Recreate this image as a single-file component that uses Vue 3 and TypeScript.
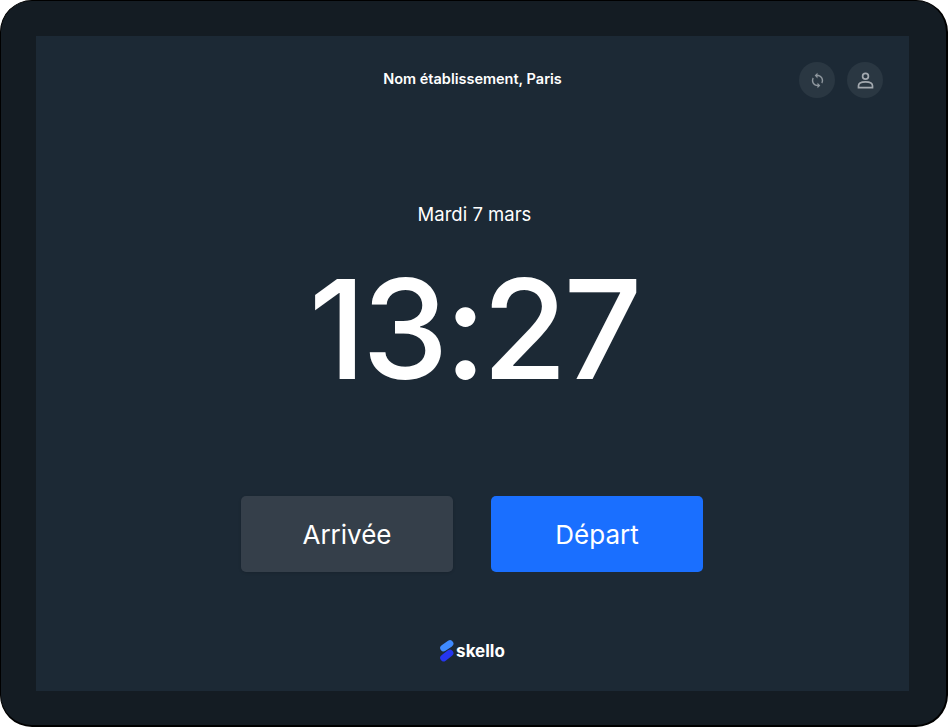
<script setup lang="ts">
const place = 'Nom établissement, Paris'
const date = 'Mardi 7 mars'
const time = '13:27'
</script>

<template>
  <div class="device">
    <main class="screen">
      <header class="top">
        <div class="place">{{ place }}</div>
        <div class="actions">
          <button class="round" aria-label="Synchroniser">
            <svg width="17" height="17" viewBox="0 0 24 24" fill="#8f979e">
              <path d="M12 4V1L8 5l4 4V6c3.31 0 6 2.69 6 6 0 1.01-.25 1.97-.7 2.8l1.46 1.46C19.54 15.03 20 13.57 20 12c0-4.42-3.58-8-8-8zm0 14c-3.31 0-6-2.69-6-6 0-1.01.25-1.97.7-2.8L5.24 7.74C4.46 8.97 4 10.43 4 12c0 4.42 3.58 8 8 8v3l4-4-4-4v3z" />
            </svg>
          </button>
          <button class="round" aria-label="Profil">
            <svg width="17" height="17" viewBox="0 0 17 17" fill="none" stroke="#a3a9af" stroke-width="1.7">
              <circle cx="8.5" cy="4.2" r="2.9" />
              <path d="M1.5 15.6V13.8C1.5 11.2 4.6 9.8 8.5 9.8S15.5 11.2 15.5 13.8V15.6Z" />
            </svg>
          </button>
        </div>
      </header>
      <div class="date">{{ date }}</div>
      <div class="time">{{ time }}</div>
      <div class="buttons">
        <button class="btn arrive">Arrivée</button>
        <button class="btn leave">Départ</button>
      </div>
      <footer class="logo">
        <svg width="14" height="22" viewBox="0 0 14 22" fill="none" stroke-width="6.8" stroke-linecap="round">
          <path d="M3.6 8 10 3.6" stroke="#3f8bff" />
          <path d="M3.6 18 10 13" stroke="#2536f0" />
        </svg>
        <span>skello</span>
      </footer>
    </main>
  </div>
</template>

<style>
html, body { margin: 0; background: #fff; }
</style>

<style scoped>
.device {
  box-sizing: border-box;
  width: 948px;
  height: 727px;
  padding: 35px 37px 34px 35px;
  background: #141c23;
  border: 1px solid #000;
  border-width: 1px 2px 2px 1px;
  border-radius: 32px;
  font-family: "Inter", "Liberation Sans", sans-serif;
  color: #fff;
}
.screen {
  height: 655px;
  background: #1c2935;
  display: flex;
  flex-direction: column;
  align-items: center;
}
.top {
  position: relative;
  width: 100%;
  height: 88px;
  display: flex;
  justify-content: center;
  align-items: center;
}
.place {
  font-size: 14.5px;
  font-weight: 600;
  margin-bottom: 4px;
}
.actions {
  position: absolute;
  right: 26px;
  top: 26px;
  display: flex;
  gap: 12px;
}
.round {
  width: 36px;
  height: 36px;
  padding: 0;
  border: 0;
  border-radius: 50%;
  background: #2a3742;
  display: flex;
  align-items: center;
  justify-content: center;
}
.date {
  margin-top: 78px;
  padding-left: 4px;
  font-size: 18.5px;
  line-height: 24px;
}
.time {
  margin-top: 23px;
  padding-left: 2px;
  font-size: 138px;
  font-weight: 450;
  line-height: 160px;
  letter-spacing: -4px;
}
.buttons {
  margin-top: 87px;
  margin-right: 1px;
  display: flex;
  gap: 38px;
}
.btn {
  width: 212px;
  height: 76px;
  border: 0;
  border-radius: 5px;
  font-family: inherit;
  font-size: 26px;
  color: #fff;
}
.arrive { background: #353f4a; box-shadow: 0 1px 3px rgba(0, 0, 0, 0.15); }
.leave { background: #1a6fff; }
.logo {
  margin-top: 68px;
  display: flex;
  align-items: center;
  gap: 2px;
  font-size: 17px;
  font-weight: 700;
}
</style>
